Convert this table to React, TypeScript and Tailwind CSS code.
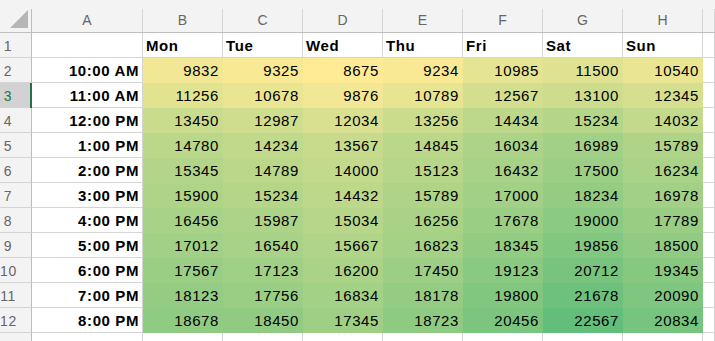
const days = ['Mon', 'Tue', 'Wed', 'Thu', 'Fri', 'Sat', 'Sun']
const letters = ['A', 'B', 'C', 'D', 'E', 'F', 'G', 'H', '']

const data: [string, number[]][] = [
  ['10:00 AM', [9832, 9325, 8675, 9234, 10985, 11500, 10540]],
  ['11:00 AM', [11256, 10678, 9876, 10789, 12567, 13100, 12345]],
  ['12:00 PM', [13450, 12987, 12034, 13256, 14434, 15234, 14032]],
  ['1:00 PM', [14780, 14234, 13567, 14845, 16034, 16989, 15789]],
  ['2:00 PM', [15345, 14789, 14000, 15123, 16432, 17500, 16234]],
  ['3:00 PM', [15900, 15234, 14432, 15789, 17000, 18234, 16978]],
  ['4:00 PM', [16456, 15987, 15034, 16256, 17678, 19000, 17789]],
  ['5:00 PM', [17012, 16540, 15667, 16823, 18345, 19856, 18500]],
  ['6:00 PM', [17567, 17123, 16200, 17450, 19123, 20712, 19345]],
  ['7:00 PM', [18123, 17756, 16834, 18178, 19800, 21678, 20090]],
  ['8:00 PM', [18678, 18450, 17345, 18723, 20456, 22567, 20834]],
]

const all = data.flatMap(r => r[1])
const MIN = Math.min(...all)
const MAX = Math.max(...all)

// two-colour scale, yellow -> green
function scale(v: number): string {
  const t = (v - MIN) / (MAX - MIN)
  const lo = [0xff, 0xeb, 0x96]
  const hi = [0x63, 0xbe, 0x7b]
  const c = lo.map((l, i) => Math.round(l + (hi[i] - l) * t))
  return `rgb(${c[0]}, ${c[1]}, ${c[2]})`
}

function RowHead({ n, selected }: { n: number; selected?: boolean }) {
  return (
    <div
      className={`relative h-[25px] border-b border-r border-b-[#d4d4d4] border-r-[#bdbdbd] flex items-center ${
        selected ? 'bg-[#d2d2d2] text-[#217346]' : 'bg-[#f3f3f3] text-[#666666]'
      }`}
    >
      <span className="w-[16px] text-center text-[14px] pt-[2px]">{n}</span>
      {selected && <div className="absolute right-[-1px] top-0 bottom-[-1px] w-[2px] bg-[#217346]" />}
    </div>
  )
}

export default function App() {
  return (
    <div className="w-[715px] h-[341px] overflow-hidden bg-white font-['Liberation_Sans',Arial,sans-serif] tracking-[0.6px]">
      <div className="grid grid-cols-[32px_111px_repeat(7,80px)_12px]">
        {/* column headers */}
        <div className="h-[33px] bg-[#f3f3f3] border-b border-[#bfbfbf] flex flex-col">
          <div className="mt-[9px] flex-1 border-r border-[#bdbdbd] relative">
            <svg className="absolute left-[10px] top-[1px]" width="19" height="19" viewBox="0 0 19 19">
              <polygon points="18,0 18,18 0,18" fill="#b6b6b6" />
            </svg>
          </div>
        </div>
        {letters.map((l, i) => (
          <div key={i} className="h-[33px] bg-[#f3f3f3] border-b border-[#bfbfbf] flex flex-col">
            <div className="mt-[9px] flex-1 border-r border-[#d6d6d6] flex items-center justify-center text-[14px] text-[#666666] tracking-normal">
              {l}
            </div>
          </div>
        ))}

        {/* row 1 */}
        <RowHead n={1} />
        <div className="h-[25px] border-b border-r border-[#d4d4d4]" />
        {days.map(d => (
          <div key={d} className="h-[25px] border-b border-r border-[#d4d4d4] flex items-center pt-[3px] pl-[3px] text-[15px] font-bold text-black">
            {d}
          </div>
        ))}
        <div className="h-[25px] border-b border-r border-[#d4d4d4]" />

        {/* data rows */}
        {data.map(([time, vals], r) => (
          <div key={time} className="contents">
            <RowHead n={r + 2} selected={r === 1} />
            <div className="h-[25px] border-b border-r border-[#d4d4d4] flex items-center justify-end pt-[3px] pr-[3px] text-[15px] font-bold text-black">
              {time}
            </div>
            {vals.map((v, c) => (
              <div
                key={c}
                className="h-[25px] border-b border-r flex items-center justify-end pt-[3px] pr-[3px] text-[15px] text-black"
                style={{ backgroundColor: scale(v), borderColor: scale(v) }}
              >
                {v}
              </div>
            ))}
            <div className="h-[25px] border-b border-r border-[#d4d4d4]" />
          </div>
        ))}

        {/* row 13, partly visible */}
        <RowHead n={13} />
        {letters.map((_, i) => (
          <div key={i} className="h-[25px] border-b border-r border-[#d4d4d4]" />
        ))}
      </div>
    </div>
  )
}
